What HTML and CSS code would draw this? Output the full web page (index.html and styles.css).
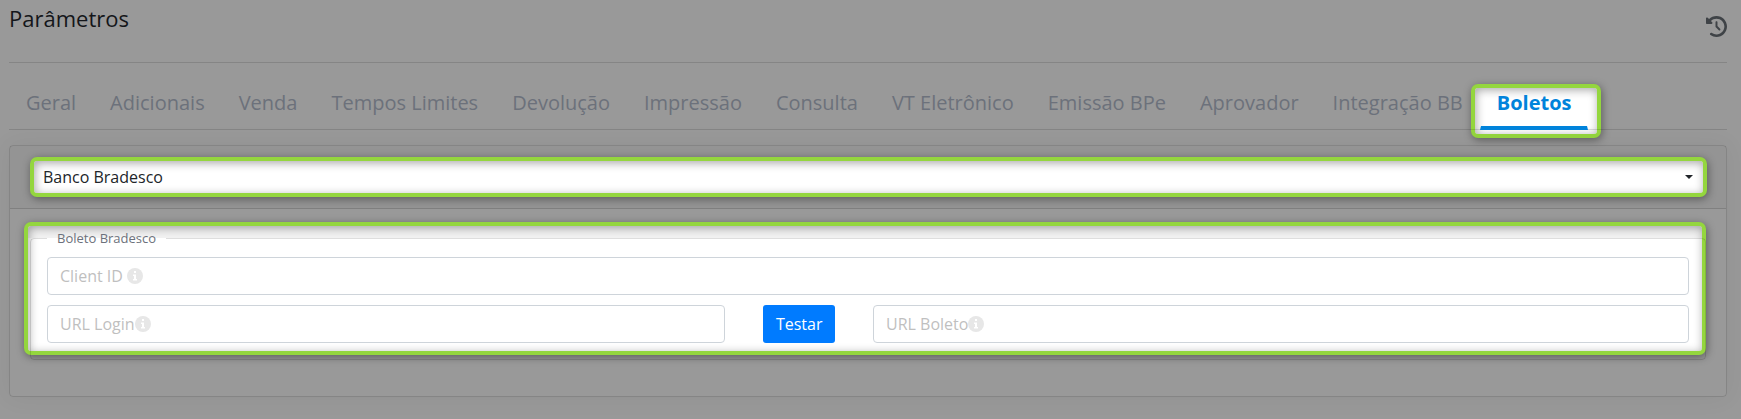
FILE: index.html
```
<!DOCTYPE html>
<html lang="pt-BR">
<head>
    <meta charset="UTF-8">
    <meta name="viewport" content="width=device-width, initial-scale=1.0">
    <title>Parâmetros</title>
    <link rel="stylesheet" href="styles.css">
</head>
<body>
    <main class="page">
        <header class="page-header">
            <h1>Parâmetros</h1>
            <button type="button" class="history-button" aria-label="Histórico">
                <svg viewBox="0 0 512 512" xmlns="http://www.w3.org/2000/svg">
                    <path fill="currentColor" d="M75 75L41 41C25.900 25.900 0 36.600 0 57.900V168c0 13.300 10.700 24 24 24h110.100c21.400 0 32.100-25.900 17-41l-30.800-30.800C155 85.500 203 64 256 64c106 0 192 86 192 192s-86 192-192 192c-40.800 0-78.600-12.700-109.700-34.400-14.500-10.100-34.400-6.600-44.600 7.900s-6.600 34.400 7.900 44.600C151.200 495 201.700 512 256 512c141.400 0 256-114.600 256-256S397.400 0 256 0C185.300 0 121.300 28.700 75 75zm181 53c-13.300 0-24 10.700-24 24v104c0 6.400 2.500 12.500 7 17l72 72c9.400 9.400 24.600 9.400 33.900 0s9.400-24.600 0-33.900l-65-65V152c0-13.300-10.700-24-24-24z"/>
                </svg>
            </button>
        </header>

        <nav class="nav-tabs">
            <a href="#geral" class="nav-link">Geral</a>
            <a href="#adicionais" class="nav-link">Adicionais</a>
            <a href="#venda" class="nav-link">Venda</a>
            <a href="#tempos" class="nav-link">Tempos Limites</a>
            <a href="#devolucao" class="nav-link">Devolução</a>
            <a href="#impressao" class="nav-link">Impressão</a>
            <a href="#consulta" class="nav-link">Consulta</a>
            <a href="#vt" class="nav-link">VT Eletrônico</a>
            <a href="#bpe" class="nav-link">Emissão BPe</a>
            <a href="#aprovador" class="nav-link">Aprovador</a>
            <a href="#bb" class="nav-link">Integração BB</a>
            <a href="#boletos" class="nav-link active highlight" aria-current="page">Boletos</a>
        </nav>

        <section class="card">
            <div class="card-header">
                <div class="select-wrap highlight">
                    <select class="bank-select" aria-label="Banco">
                        <option>Banco Bradesco</option>
                    </select>
                </div>
            </div>
            <div class="card-body">
                <fieldset class="group highlight">
                    <legend>Boleto Bradesco</legend>
                    <div class="row">
                        <div class="field">
                            <input type="text" id="client-id" placeholder=" ">
                            <label for="client-id">Client ID&nbsp;<svg class="info" viewBox="0 0 16 16"><circle cx="8" cy="8" r="8"/><path d="M7 3h2v2H7zM6 6.500h3v4.500h1v1.500H6V11h1V8H6z"/></svg></label>
                        </div>
                    </div>
                    <div class="row row-split">
                        <div class="field">
                            <input type="text" id="url-login" placeholder=" ">
                            <label for="url-login">URL Login<svg class="info" viewBox="0 0 16 16"><circle cx="8" cy="8" r="8"/><path d="M7 3h2v2H7zM6 6.500h3v4.500h1v1.500H6V11h1V8H6z"/></svg></label>
                        </div>
                        <button type="button" class="btn-primary">Testar</button>
                        <div class="field">
                            <input type="text" id="url-boleto" placeholder=" ">
                            <label for="url-boleto">URL Boleto<svg class="info" viewBox="0 0 16 16"><circle cx="8" cy="8" r="8"/><path d="M7 3h2v2H7zM6 6.500h3v4.500h1v1.500H6V11h1V8H6z"/></svg></label>
                        </div>
                    </div>
                </fieldset>
            </div>
        </section>
    </main>
</body>
</html>
```
FILE: styles.css
```
:root {
    --backdrop: #999999;
    --line: rgba(0, 0, 0, 0.13);
    --green: #94d63e;
    --primary: #007bff;
    --tab-active: #0083db;
}

* {
    box-sizing: border-box;
}

body {
    margin: 0;
    font-family: "Open Sans", "Noto Sans", sans-serif;
    font-size: 16px;
    line-height: 24px;
    color: #212529;
    background-color: var(--backdrop);
}

.page {
    isolation: isolate;
    padding: 0 14px 22px 9px;
}

.page-header {
    display: flex;
    justify-content: space-between;
    align-items: flex-start;
    height: 63px;
    padding-top: 3px;
    border-bottom: 1px solid var(--line);
}

h1 {
    margin: 0;
    font-size: 22px;
    line-height: 30px;
    font-weight: 400;
    color: #14161a;
}

.history-button {
    margin-top: 13px;
    padding: 0;
    border: 0;
    background: none;
    color: #3f4347;
    cursor: pointer;
}

.history-button svg {
    display: block;
    width: 21px;
    height: 21px;
}

/* Tabs */
.nav-tabs {
    display: flex;
    margin-top: 16px;
    border-bottom: 1px solid var(--line);
}

.nav-link {
    margin-bottom: -1px;
    padding: 8px 16px;
    border: 1px solid transparent;
    border-bottom-width: 4px;
    font-size: 20px;
    line-height: 30px;
    color: #6c717b;
    text-decoration: none;
    white-space: nowrap;
}

.nav-link.active {
    font-weight: 700;
    color: var(--tab-active);
    border-bottom-color: var(--tab-active);
}

/* Spotlight frame drawn behind the element */
.highlight {
    position: relative;
}

.highlight::before {
    content: '';
    position: absolute;
    z-index: -1;
    background-color: #fff;
    border: 4px solid var(--green);
    border-radius: 7px;
    box-shadow: 1px 2px 8px rgba(0, 0, 0, 0.4), inset 1px 2px 10px rgba(0, 0, 0, 0.35);
}

.nav-link.highlight::before {
    inset: 4px -14px -12px -10px;
}

.select-wrap.highlight {
    isolation: isolate;
}

.select-wrap.highlight::before {
    inset: -4px;
}

.group.highlight::before {
    inset: -25px -1px 4px -7px;
    background: linear-gradient(#f2f2f2, #f2f2f2) top / 100% 12px no-repeat #fff;
}

/* Card */
.card {
    margin-top: 15px;
    border: 1px solid var(--line);
    border-radius: 4px;
    box-shadow: 0 0 24px rgba(0, 0, 0, 0.06);
}

.card-header {
    padding: 15px 23px 15px 24px;
    border-bottom: 1px solid var(--line);
    background-color: rgba(0, 0, 0, 0.03);
}

.bank-select {
    display: block;
    width: 100%;
    height: 32px;
    padding: 0 9px;
    border: 0;
    border-radius: 3px;
    appearance: none;
    font: inherit;
    color: #212529;
    background: none;
}

.select-wrap::after {
    content: '';
    position: absolute;
    top: 14px;
    right: 10px;
    border: 4px solid transparent;
    border-top-color: #212529;
    border-bottom: 0;
    pointer-events: none;
}

.card-body {
    padding: 20px 20px 36px;
}

.group {
    margin: 0;
    padding: 0 11px 16px;
    min-width: 0;
    border: 1px solid var(--line);
    border-radius: 4px;
}

legend {
    margin-left: 5px;
    padding: 0 10px;
    font-size: 13px;
    line-height: 18px;
    color: #6c717b;
}

.row {
    display: grid;
    margin-top: 10px;
}

.row-split {
    grid-template-columns: 5fr 1fr 6fr;
}

.field {
    position: relative;
    padding: 0 5px;
}

.field input {
    display: block;
    width: 100%;
    height: 38px;
    padding: 6px 12px;
    border: 1px solid #ced4da;
    border-radius: 4px;
    font: inherit;
    color: #495057;
    background-color: #fff;
}

.field label {
    position: absolute;
    top: 7px;
    left: 18px;
    display: flex;
    align-items: center;
    color: #bfbfbf;
    pointer-events: none;
}

.field input:not(:placeholder-shown) + label {
    display: none;
}

.info {
    width: 16px;
    height: 16px;
}

.info circle {
    fill: #e7e7e7;
}

.info path {
    fill: #fff;
}

.btn-primary {
    justify-self: center;
    height: 38px;
    padding: 6px 13px;
    border: 0;
    border-radius: 3px;
    font: inherit;
    color: #fff;
    background-color: var(--primary);
    cursor: pointer;
}
```
